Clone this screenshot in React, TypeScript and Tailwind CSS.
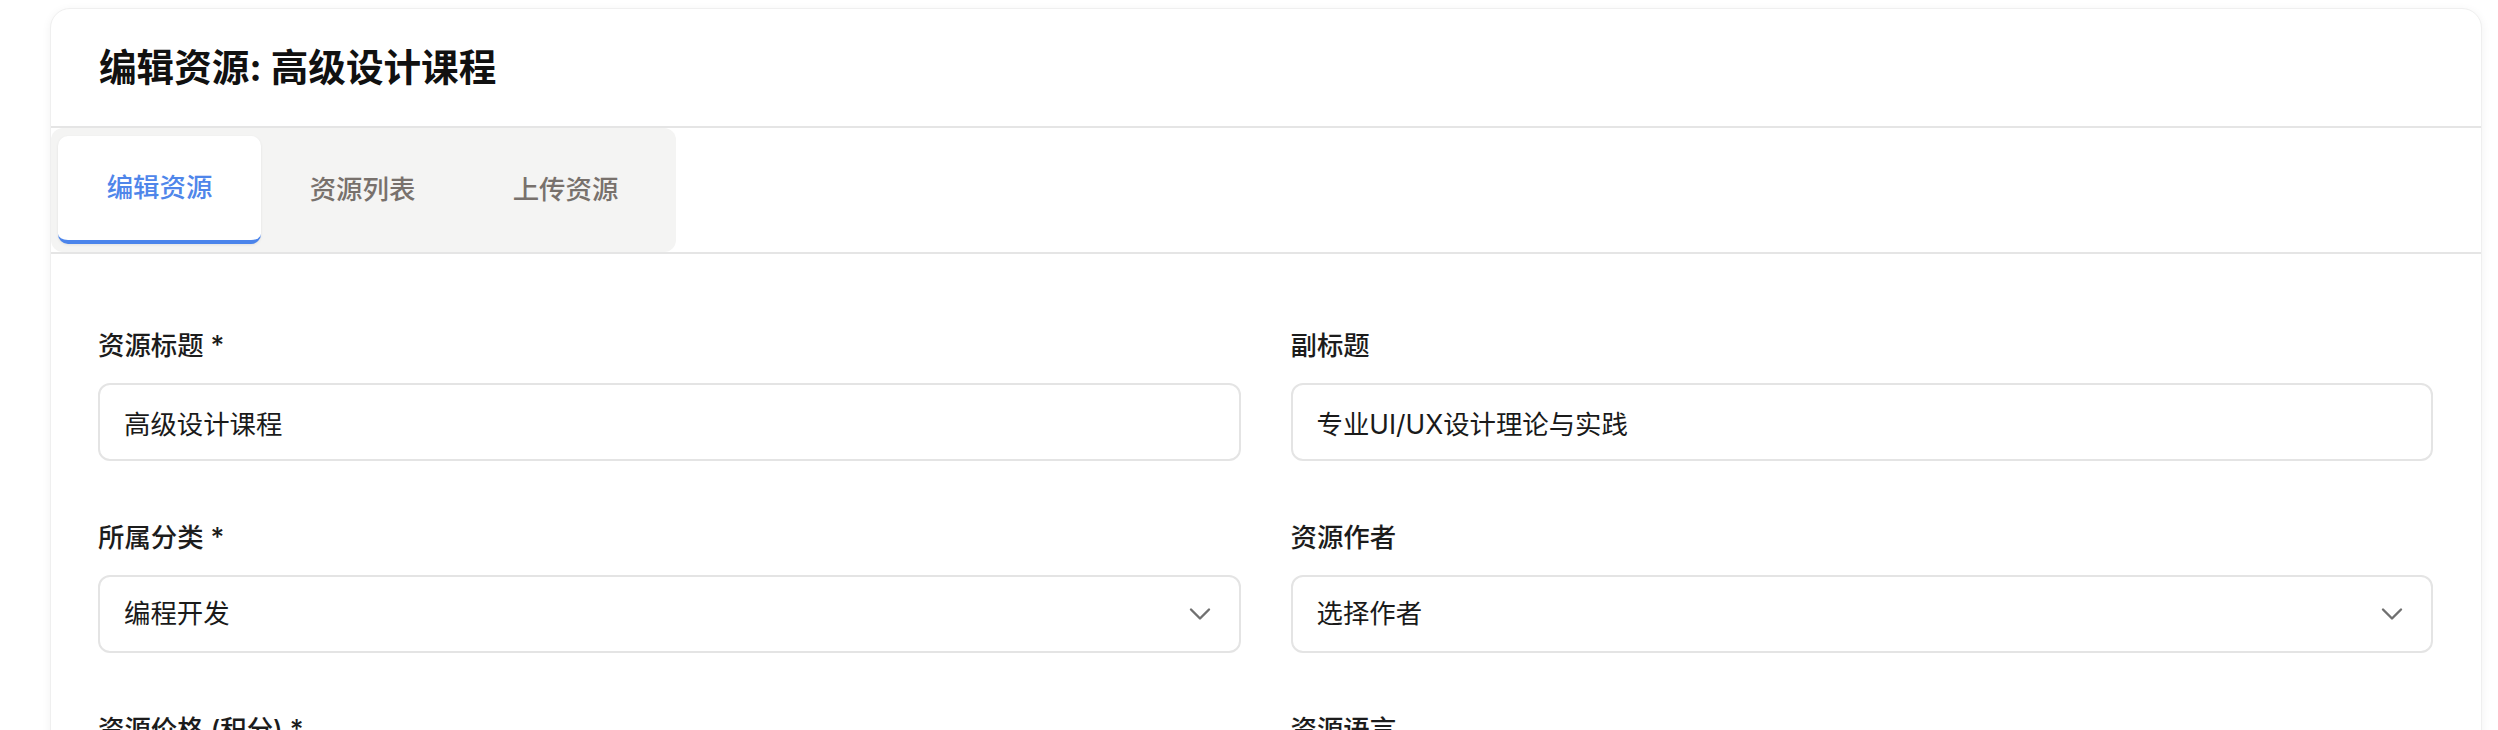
import React from "react";

const font = { fontFamily: '"Inter", "Noto Sans CJK SC", sans-serif' };

function Label({ children }: { children: React.ReactNode }) {
    return (
        <div className="text-[26.4px] leading-[38px] font-medium text-[#1c1c1c] mb-[19px]">{children}</div>
    );
}

function TextField({ label, value }: { label: string; value: string }) {
    return (
        <div>
            <Label>{label}</Label>
            <input
                readOnly
                value={value}
                className="w-full h-[78px] rounded-[12px] border-2 border-[#e4e4e4] bg-white px-[24px] text-[26.4px] text-[#1a1a1a] outline-none"
            />
        </div>
    );
}

function SelectField({ label, value }: { label: string; value: string }) {
    return (
        <div>
            <Label>{label}</Label>
            <div className="w-full h-[78px] rounded-[12px] border-2 border-[#e4e4e4] bg-white pl-[24px] pr-[27px] flex items-center justify-between text-[26.4px] text-[#1a1a1a]">
                <span>{value}</span>
                <svg width="24" height="24" viewBox="0 0 24 24" fill="none">
                    <polyline points="3,7.5 12,16.5 21,7.5" stroke="#707070" strokeWidth="2.4" strokeLinecap="round" strokeLinejoin="round" />
                </svg>
            </div>
        </div>
    );
}

export default function App() {
    const tabs = ["编辑资源", "资源列表", "上传资源"];

    return (
        <div className="min-h-screen bg-white pt-[8px] pl-[50px] pr-[16px]" style={font}>
            <div className="rounded-[20px] border border-[#efefef] bg-white shadow-[0_2px_10px_rgba(0,0,0,0.06)] overflow-hidden">
                {/* Header */}
                <div className="h-[119px] px-[48px] flex items-center border-b-2 border-[#e5e5e5]">
                    <h1 className="text-[37.6px] font-bold text-[#111] leading-none">编辑资源: 高级设计课程</h1>
                </div>

                {/* Tabs */}
                <div className="border-b-2 border-[#e5e5e5]">
                    <div className="inline-flex bg-[#f4f4f3] rounded-[12px] pl-[7px] pr-[9px] py-[8px]">
                        {tabs.map((t, i) => (
                            <div
                                key={t}
                                className={`w-[203px] h-[108px] flex items-center justify-center text-[26.4px] font-medium rounded-[10px] ${i === 0
                                    ? "bg-white text-[#4f86ea] border-b-4 border-[#4b84eb] shadow-[0_1px_3px_rgba(0,0,0,0.08)]"
                                    : "text-[#78716c]"
                                    }`}
                            >
                                {t}
                            </div>
                        ))}
                    </div>
                </div>

                {/* Form */}
                <div className="pt-[72px] pl-[47px] pr-[48px] pb-[60px]">
                    <div className="grid grid-cols-2 gap-x-[50px] gap-y-[57px]">
                        <TextField label="资源标题 *" value="高级设计课程" />
                        <TextField label="副标题" value="专业UI/UX设计理论与实践" />
                        <SelectField label="所属分类 *" value="编程开发" />
                        <SelectField label="资源作者" value="选择作者" />
                        <TextField label="资源价格 (积分) *" value="100" />
                        <SelectField label="资源语言" value="中文" />
                    </div>
                </div>
            </div>
        </div>
    );
}
